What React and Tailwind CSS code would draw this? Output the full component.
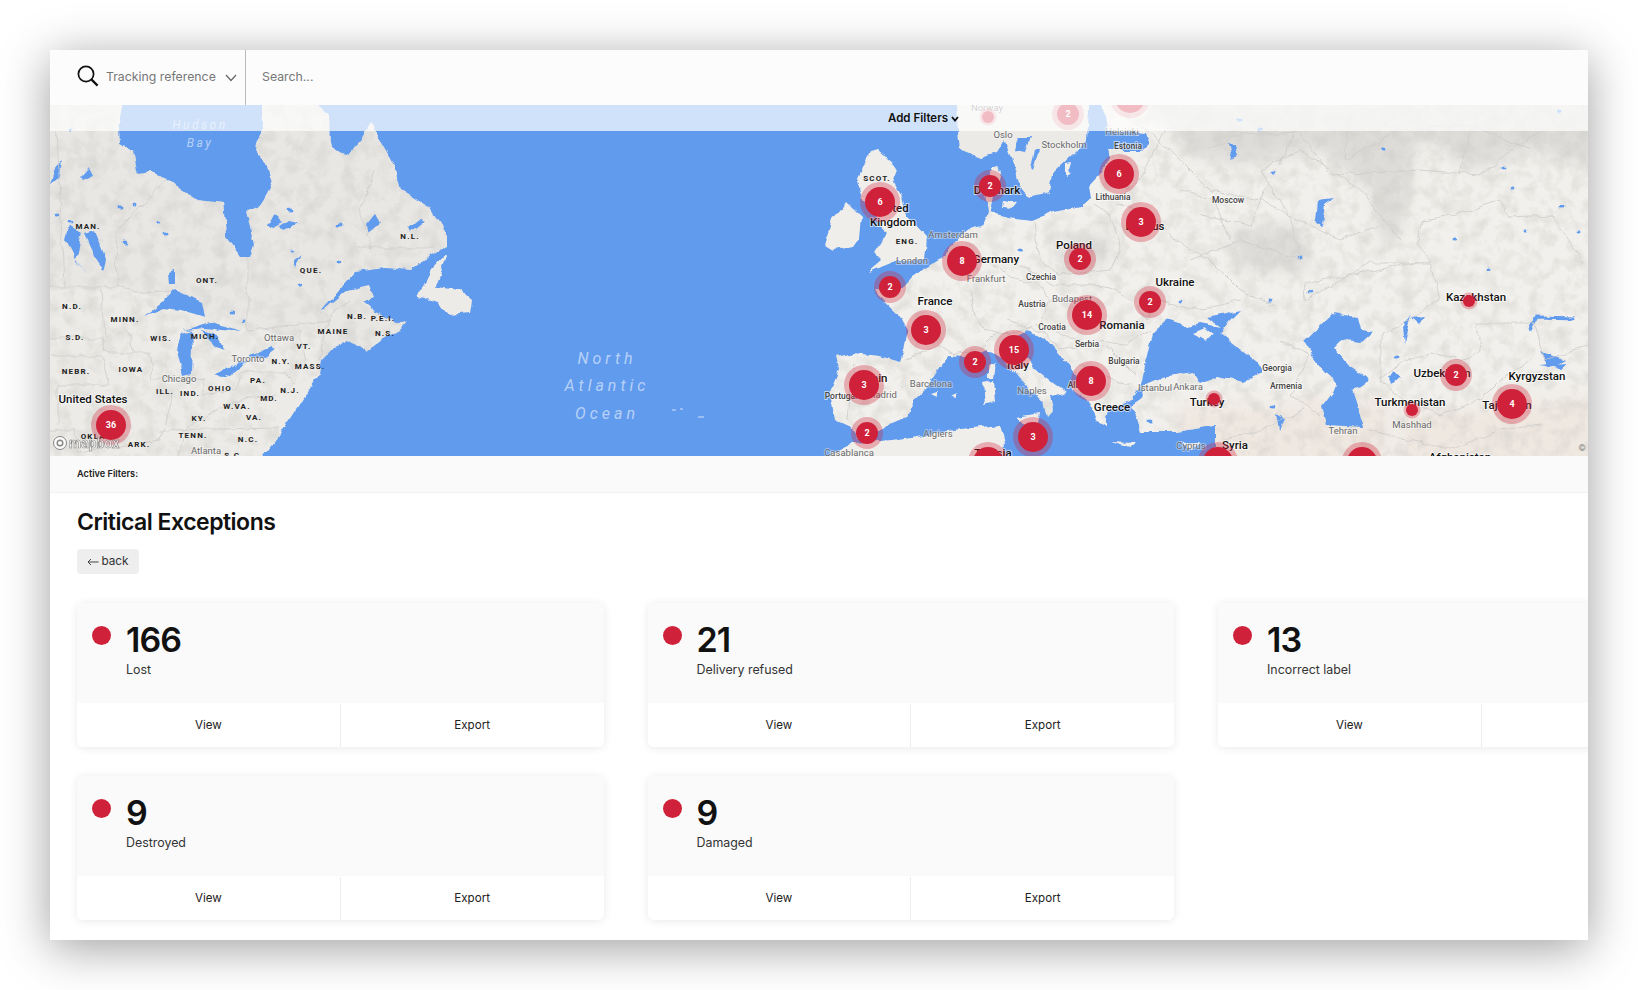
const bubbles = [
  [111, 425, "36", 1], [880, 202, "6", 1], [990, 186, "2", 0], [1119, 174, "6", 1], [1141, 222, "3", 1],
  [1080, 259, "2", 0], [962, 261, "8", 1], [890, 287, "2", 0], [926, 330, "3", 1], [1150, 302, "2", 0],
  [1087, 315, "14", 1], [1014, 350, "15", 1], [975, 362, "2", 0], [864, 385, "3", 1], [1091, 381, "8", 1],
  [867, 433, "2", 0], [1033, 437, "3", 1], [988, 462, "", 1], [1218, 462, "", 1], [1362, 462, "", 1],
  [1068, 114, "2", 0], [1130, 98, "", 1], [1456, 375, "2", 0], [1512, 404, "4", 1],
];
const dots = [[988, 117], [1214, 399], [1469, 301], [1412, 410]];

const labels = [
  ["MAN.", 88, 227, "s"], ["N.L.", 410, 237, "s"], ["QUE.", 311, 271, "s"], ["ONT.", 207, 281, "s"], ["N.D.", 72, 307, "s"],
  ["MINN.", 125, 320, "s"], ["N.B.", 357, 317, "s"], ["P.E.I.", 383, 319, "s"], ["MAINE", 333, 332, "s"], ["S.D.", 75, 338, "s"],
  ["WIS.", 161, 339, "s"], ["MICH.", 205, 337, "s"], ["N.S.", 385, 334, "s"], ["VT.", 304, 347, "s"], ["N.Y.", 281, 362, "s"],
  ["MASS.", 310, 367, "s"], ["IOWA", 131, 370, "s"], ["NEBR.", 76, 372, "s"], ["PA.", 258, 381, "s"], ["OHIO", 220, 389, "s"],
  ["ILL.", 165, 392, "s"], ["IND.", 190, 394, "s"], ["N.J.", 290, 391, "s"], ["MD.", 269, 399, "s"], ["W.VA.", 237, 407, "s"],
  ["VA.", 254, 418, "s"], ["KY.", 199, 419, "s"], ["TENN.", 193, 436, "s"], ["OKLA.", 95, 437, "s"], ["N.C.", 248, 440, "s"],
  ["ARK.", 139, 445, "s"], ["S.C.", 234, 456, "s"], ["SCOT.", 877, 179, "s"], ["ENG.", 907, 242, "s"],
  ["Ottawa", 279, 338, "g"], ["Toronto", 248, 359, "g"], ["Chicago", 179, 379, "g"], ["Atlanta", 206, 451, "g"],
  ["London", 912, 261, "g"], ["Amsterdam", 953, 235, "g"], ["Frankfurt", 986, 279, "g"], ["Budapest", 1072, 299, "g"],
  ["Barcelona", 931, 384, "g"], ["Madrid", 882, 395, "g"], ["Naples", 1032, 391, "g"], ["Istanbul", 1155, 388, "g"],
  ["Ankara", 1188, 387, "g"], ["Algiers", 938, 434, "g"], ["Cyprus", 1191, 446, "g"], ["Casablanca", 849, 453, "g"],
  ["Oslo", 1003, 135, "g"], ["Stockholm", 1064, 145, "g"], ["Helsinki", 1122, 132, "g"], ["Norway", 987, 108, "g"],
  ["Tehran", 1343, 431, "g"], ["Mashhad", 1412, 425, "g"],
  ["Czechia", 1041, 278, "r"], ["Austria", 1032, 305, "r"], ["Croatia", 1052, 328, "r"], ["Serbia", 1087, 345, "r"],
  ["Bulgaria", 1124, 362, "r"], ["Portugal", 841, 397, "r"], ["Lithuania", 1113, 198, "r"], ["Estonia", 1128, 147, "r"],
  ["Moscow", 1228, 201, "r"], ["Georgia", 1277, 369, "r"], ["Armenia", 1286, 387, "r"], ["Albania", 1082, 386, "r"],
  ["United States", 93, 400, "c"], ["United", 892, 209, "c"], ["Kingdom", 893, 223, "c"], ["Denmark", 997, 191, "c"],
  ["Germany", 996, 260, "c"], ["Poland", 1074, 246, "c"], ["Belarus", 1145, 227, "c"], ["France", 935, 302, "c"],
  ["Ukraine", 1175, 283, "c"], ["Romania", 1122, 326, "c"], ["Spain", 873, 379, "c"], ["Italy", 1018, 366, "c"],
  ["Greece", 1112, 408, "c"], ["Turkey", 1207, 403, "c"], ["Syria", 1235, 446, "c"], ["Tunisia", 993, 454, "c"],
  ["Kazakhstan", 1476, 298, "c"], ["Uzbekistan", 1442, 374, "c"], ["Kyrgyzstan", 1537, 377, "c"],
  ["Turkmenistan", 1410, 403, "c"], ["Tajikistan", 1507, 406, "c"], ["Afghanistan", 1460, 458, "c"],
];

const labelClass = {
  s: "fill-[#222] text-[8px] font-bold tracking-[1.2px]",
  g: "fill-[#6a6a6a] text-[9.5px] stroke-white/40 stroke-2 [paint-order:stroke]",
  r: "fill-[#444] text-[8.5px] font-medium stroke-white/60 stroke-2 [paint-order:stroke]",
  c: "fill-[#111] text-[11.5px] font-medium stroke-white/60 stroke-2 [paint-order:stroke]",
};

const america =
  "M40 95L125 95L119 130L120 143L134 150L139 174L151 172L167 178L178 188L198 200L223 203L225 220L226 237L240 257L251 257L255 245L251 227L247 210L261 203L272 183L266 163L255 150L256 143L262 132L262 95L313 95L329 115L330 143L331 147L348 155L362 140L371 122L380 140L393 163L400 190L432 210L446 230L446 247L428 257L411 270L385 268L355 272L320 313L348 290L369 285L374 297L362 302L372 310L400 323L409 320L400 330L383 340L366 353L359 347L348 340L334 347L322 360L320 372L306 382L294 385L282 400L278 420L278 437L255 466L40 466Z";
const newfoundland = "M446 255L432 270L418 297L439 302L449 315L470 313L472 300L460 290L435 287L447 257Z";
const eurasia =
  "M837 357L853 353L880 356L900 362L903 353L908 333L897 313L878 295L875 287L890 290L902 288L912 277L927 267L943 257L953 243L970 228L983 225L988 213L983 180L997 165L1002 177L993 197L990 212L1007 217L1033 220L1053 212L1083 207L1090 198L1088 187L1102 172L1110 158L1108 150L1140 150L1148 142L1145 133L1107 130L1102 95L1598 95L1598 466L1215 466L1215 427L1200 428L1175 432L1140 432L1135 415L1130 405L1142 397L1140 387L1130 400L1110 410L1107 417L1107 425L1097 420L1087 400L1073 390L1077 377L1067 363L1047 340L1027 330L1017 337L1020 347L1033 367L1053 383L1067 393L1050 397L1053 410L1047 417L1043 402L1027 387L1010 367L1000 357L987 350L967 358L950 355L938 370L927 387L913 400L907 417L877 430L857 437L850 427L835 420L830 393L840 370Z";
const scandinavia =
  "M955 95L958 130L960 150L980 158L997 153L1005 140L1012 157L1020 187L1030 198L1050 193L1053 173L1077 150L1087 140L1090 95Z";

const land = [
  "M870 152L878 150L895 165L898 170L893 183L900 195L908 217L927 237L925 260L898 260L867 273L882 260L875 253L888 233L877 223L878 217L863 200L857 180L863 167Z",
  "M833 220L847 202L862 217L860 237L853 247L833 250L825 245Z",
  "M830 466L830 455L853 443L892 440L953 430L1000 425L1005 443L1003 466Z",
  "M988 367L995 364L993 378L988 378Z M983 382L993 380L995 402L985 405Z M1017 417L1040 413L1037 428L1023 423Z",
  "M1110 442L1135 443L1130 447Z M1180 443L1200 442L1193 449Z M1003 200L1017 203L1013 208L1002 207Z M1065 163L1072 162L1068 175L1065 177Z",
  "M932 393L938 391L938 396Z M950 395L955 392L955 398Z",
];

const lakes = [
  "M143 317L164 300L174 290L202 302L205 317L181 310L164 308Z", "M177 350L181 333L191 330L192 347L191 373L183 375Z",
  "M202 330L218 335L226 350L216 347L208 340Z", "M183 330L210 322L240 332L205 328Z", "M214 375L240 363L249 362L240 368L223 377Z",
  "M249 355L272 347L275 350L265 357L251 358Z", "M84 233L94 230L106 260L103 270L96 260Z", "M70 225L82 232L76 260L88 275L78 262L66 240Z",
  "M54 170L62 160L60 175L50 185Z", "M80 178L90 167L94 175L83 180Z", "M265 225L275 215L283 221L270 228Z", "M280 225L288 220L300 222L283 230Z",
  "M365 225L375 213L380 222L368 232Z", "M408 228L420 218L425 220L410 232Z", "M168 272L175 270L175 283L169 283Z", "M293 262L302 255L295 268Z",
  "M1018 137L1030 137L1025 152L1015 150Z", "M1034 150L1038 150L1032 170L1030 168Z",
  "M1228 143L1235 145L1238 155L1232 158Z", "M1318 200L1333 198L1325 204L1322 225L1316 220Z", "M1403 330L1412 315L1405 342Z",
  "M1412 318L1425 316L1420 325Z", "M1393 370L1400 378L1392 385L1390 378Z", "M1540 350L1565 360L1550 368Z", "M1277 415L1285 420L1280 430Z",
  "M1540 365L1566 363L1560 368Z",
];
const ponds = [
  [1383, 147], [1273, 173], [1502, 167], [1513, 188], [1562, 207], [1578, 233], [1455, 238], [1489, 269], [1525, 230],
  [1397, 357], [1300, 257], [1270, 300], [1310, 293], [1272, 408], [1240, 120], [1260, 130], [1560, 112],
  [57, 215], [70, 222], [120, 207], [136, 205], [125, 243], [160, 222], [166, 235], [289, 210], [291, 250], [338, 262], [300, 285],
  [340, 225], [70, 130], [232, 312], [245, 320], [1180, 300], [1125, 405], [1150, 420], [1020, 250],
];

const americaBorders = [
  "M57 130L64 287L50 287", "M64 287L117 287L116 233L167 178", "M117 287L140 293L172 292", "M50 338L102 338L105 353L150 353L152 378L190 378L204 380",
  "M50 356L102 356L110 385L58 385L58 425", "M50 430L75 430L78 452L160 440L174 392", "M160 430L280 428", "M177 458L185 430L205 415L240 400L275 395",
  "M204 378L204 395L236 390L240 372L285 372L294 385", "M248 257L248 330L270 328L330 322", "M355 248L435 248", "M375 170L360 215L372 250",
  "M325 330L335 310L350 300", "M300 330L305 365", "M325 335L320 360", "M102 290L105 338", "M135 353L125 330",
];
const eurasiaBorders = [
  "M970 290L975 315L985 330L1003 335L1040 325L1050 300L1040 285L1010 278L1000 268L985 260",
  "M1020 265L1052 285L1090 285L1120 290L1148 320L1155 300L1200 310L1240 300",
  "M1035 222L1040 260L1060 275L1110 270L1120 245L1110 215L1095 205",
  "M1115 205L1150 212L1175 240L1215 265L1240 290L1275 305",
  "M1120 195L1140 180L1150 160L1165 130", "M1040 325L1075 340L1110 350L1135 375",
  "M1095 340L1125 345L1150 330", "M1080 365L1100 375L1130 385", "M905 360L940 345L955 355L985 345L1000 330",
  "M1280 340L1310 355L1290 395L1320 415", "M1225 440L1260 430L1305 410",
  "M855 365L850 395L848 420", "M1005 320L1045 333L1060 350L1090 345",
  "M1423 220L1467 212L1500 200L1510 217L1553 215L1583 263", "M1423 220L1417 245L1430 260L1306 283L1305 300L1340 280L1370 263L1430 263",
  "M1430 263L1440 300L1430 305L1412 320L1381 335L1381 378L1400 363L1430 353L1467 360L1480 350L1477 323L1533 323L1545 360L1588 345",
  "M1381 378L1395 395L1440 415L1480 400L1500 380L1530 360", "M1370 430L1450 450L1500 430L1540 425",
  "M1210 150L1240 135L1300 132L1330 175L1420 170L1480 175L1540 130", "M1170 150L1210 190L1260 200L1290 215L1340 240L1380 225",
  "M1190 260L1240 240L1300 260", "M1300 260L1290 215L1260 170L1300 150L1360 190L1400 240", "M1120 110L1170 150",
  "M1200 215L1250 225L1270 180", "M1350 105L1345 160L1400 130L1470 125", "M1460 175L1470 125L1530 150",
  "M1300 120L1280 165", "M1230 240L1215 200L1180 190",
];
const patches = [
  "M1140 95L1598 95L1598 170L1530 150L1470 170L1420 135L1400 235L1385 250L1370 190L1320 150L1240 165L1190 155Z",
  "M1060 235L1110 235L1110 262L1060 270Z", "M1230 230L1300 225L1310 270L1240 270Z",
];
const warmPatches = ["M1180 405L1300 405L1320 466L1170 466Z", "M1400 415L1598 395L1598 466L1400 466Z", "M1300 395L1390 400L1390 466L1300 466Z"];

function MapLayer() {
  return (
    <svg viewBox="50 105 1538 351" className="absolute inset-0 h-full w-full font-['Roboto',sans-serif]">
      <defs>
        <clipPath id="land-clip">
          <path d={america} />
          <path d={eurasia} />
        </clipPath>
        <filter id="coast" filterUnits="userSpaceOnUse" x="40" y="95" width="1560" height="371" colorInterpolationFilters="sRGB">
          <feTurbulence type="fractalNoise" baseFrequency="0.07" numOctaves="3" seed="4" result="noise" />
          <feDisplacementMap in="SourceGraphic" in2="noise" scale="7" xChannelSelector="R" yChannelSelector="G" />
        </filter>
        <filter id="mottle" filterUnits="userSpaceOnUse" x="40" y="95" width="1560" height="371" colorInterpolationFilters="sRGB">
          <feTurbulence type="fractalNoise" baseFrequency="0.07" numOctaves="3" seed="9" />
          <feColorMatrix values="0 0 0 0 0.78  0 0 0 0 0.78  0 0 0 0 0.76  0 0 0 2.2 -0.95" />
        </filter>
        <filter id="soft" filterUnits="userSpaceOnUse" x="40" y="95" width="1560" height="371" colorInterpolationFilters="sRGB">
          <feGaussianBlur stdDeviation="7" />
        </filter>
      </defs>

      <rect x="50" y="105" width="1538" height="351" fill="#619bee" />

      <g filter="url(#coast)">
        <path d={america} fill="#e8e7e4" />
        <path d="M40 290L120 290L170 300L260 330L320 340L320 372L278 437L255 466L40 466Z" fill="#ecebe7" />
        <path d={newfoundland} fill="#ecebe7" />
        <path d={eurasia} fill="#f2f0ec" />
        <g clipPath="url(#land-clip)">
          {patches.map((d) => (
            <path key={d} d={d} fill="#dddcd9" filter="url(#soft)" />
          ))}
          {warmPatches.map((d) => (
            <path key={d} d={d} fill="#efe8e1" filter="url(#soft)" />
          ))}
          <rect x="40" y="95" width="1000" height="371" filter="url(#mottle)" opacity="0.22" />
          <rect x="1040" y="95" width="560" height="110" filter="url(#mottle)" opacity="0.25" />
        </g>
        <path d={scandinavia} fill="#ebeae7" />
        {land.map((d) => (
          <path key={d} d={d} fill="#f0eeea" />
        ))}

        {/* black sea + caspian */}
        <path d="M1145 367L1153 333L1167 320L1187 327L1200 323L1220 327L1207 317L1240 310L1223 327L1220 333L1257 363L1262 372L1243 382L1217 377L1200 383L1193 372L1163 377L1140 387Z" fill="#619bee" />
        <path d="M1193 333L1205 328L1215 335L1205 340Z" fill="#f2f0ec" />
        <path d="M1303 342L1333 313L1357 317L1360 330L1372 332L1360 343L1340 340L1333 347L1350 367L1370 380L1360 387L1353 390L1365 427L1327 425L1322 407L1337 387L1313 357Z" fill="#619bee" />
        <path d="M1200 427L1215 425L1215 466L1200 466Z" fill="#619bee" />
        <path d="M1529 331L1537 317L1575 318" fill="none" stroke="#619bee" strokeWidth="3" />

        {lakes.map((d) => (
          <path key={d} d={d} fill="#619bee" />
        ))}
        {ponds.map(([x, y]) => (
          <ellipse key={x + "-" + y} cx={x} cy={y} rx="2.5" ry="1.6" fill="#619bee" />
        ))}
        {americaBorders.map((d) => (
          <path key={d} d={d} fill="none" stroke="#cfcdcb" strokeWidth="0.8" />
        ))}
        {eurasiaBorders.map((d) => (
          <path key={d} d={d} fill="none" stroke="#cdcbc9" strokeWidth="0.8" />
        ))}
      </g>

      {labels.map(([text, x, y, kind]) => (
        <text key={text + x} x={x} y={y} textAnchor="middle" dominantBaseline="middle" className={labelClass[kind]}>
          {text}
        </text>
      ))}

      <g fill="#fff" fillOpacity="0.55" textAnchor="middle" fontStyle="italic" letterSpacing="4" fontSize="16">
        <text x="607" y="364">North</text>
        <text x="607" y="391">Atlantic</text>
        <text x="607" y="419">Ocean</text>
        <text x="200" y="129" fontSize="12" letterSpacing="2.5">Hudson</text>
        <text x="200" y="147" fontSize="12" letterSpacing="2.5">Bay</text>
      </g>
      <path d="M672 410H676M680 409H683M698 417H704" stroke="#fff" strokeOpacity="0.7" strokeWidth="1" />

      {bubbles.map(([x, y, n, big]) => (
        <g key={x}>
          <circle cx={x} cy={y} r={big ? 20 : 16} fill="#cf2139" fillOpacity="0.32" />
          <circle cx={x} cy={y} r={big ? 15 : 11} fill="#cf2139" />
          <text x={x} y={y} textAnchor="middle" dominantBaseline="central" fill="#fff" fontSize="9" fontWeight="700">
            {n}
          </text>
        </g>
      ))}
      {dots.map(([x, y]) => (
        <g key={x}>
          <circle cx={x} cy={y} r="8.5" fill="#cf2139" fillOpacity="0.3" />
          <circle cx={x} cy={y} r="6" fill="#cf2139" />
        </g>
      ))}

      {/* mapbox mark */}
      <g opacity="0.85">
        <circle cx="60" cy="443" r="6.5" fill="#fff" stroke="#777" strokeWidth="1" />
        <circle cx="60" cy="443" r="2.8" fill="none" stroke="#777" strokeWidth="1.4" />
        <text x="69" y="447.5" fontSize="14" fontWeight="700" fill="#fff" fillOpacity="0.6" stroke="#777" strokeWidth="0.6">mapbox</text>
      </g>
      <text x="1582" y="451" textAnchor="middle" fontSize="9" fill="#777">©</text>
    </svg>
  );
}

function Card({ count, label }) {
  return (
    <div className="flex h-[144px] flex-col overflow-hidden rounded-md bg-white shadow-[0_1px_10px_rgba(0,0,0,0.09)]">
      <div className="flex flex-1 bg-[#fafafa] pl-[15px] pt-[20px]">
        <span className="mt-[2.5px] h-[19px] w-[19px] rounded-full bg-[#cf2139]" />
        <div className="ml-[15px]">
          <div className="text-[34px] font-semibold leading-[34px] tracking-[-1px] text-[#111]">{count}</div>
          <div className="mt-[4px] text-[12.4px] leading-[18px] text-[#333]">{label}</div>
        </div>
      </div>
      <div className="flex h-[44px] pt-[1px] text-[11.6px] text-[#222]">
        <button className="flex-1 border-r border-[#eee]">View</button>
        <button className="flex-1">Export</button>
      </div>
    </div>
  );
}

export default function App() {
  const cards = [
    ["166", "Lost"],
    ["21", "Delivery refused"],
    ["13", "Incorrect label"],
    ["9", "Destroyed"],
    ["9", "Damaged"],
  ];

  return (
    <div className="h-[990px] w-[1638px] overflow-hidden bg-white p-[50px] font-['Inter',sans-serif]">
      <div className="h-[890px] overflow-hidden bg-white shadow-[0_8px_45px_rgba(0,0,0,0.38)]">
        {/* search bar */}
        <div className="flex h-[55px] items-stretch bg-[#fcfcfc] text-[12.3px] text-[#777]">
          <div className="flex w-[196px] items-center border-r border-[#bbb] pl-[27px]">
            <svg className="-mt-[3px]" width="22" height="22" viewBox="0 0 22 22" fill="none" stroke="#111" strokeWidth="1.7">
              <circle cx="9" cy="9" r="7.6" />
              <path d="M14.6 14.6L20.6 20.6" strokeWidth="2.2" />
            </svg>
            <span className="ml-[7px] whitespace-nowrap">Tracking reference</span>
            <svg className="ml-[9px]" width="12" height="8" viewBox="0 0 12 8" fill="none" stroke="#666" strokeWidth="1.2">
              <path d="M1 1L6 6.5L11 1" />
            </svg>
          </div>
          <div className="flex items-center pl-[16px]">Search...</div>
        </div>

        {/* map */}
        <div className="relative h-[351px] overflow-hidden">
          <MapLayer />
          <div className="absolute inset-x-0 top-0 flex h-[26px] items-center bg-white/70 pl-[838px] pt-[1px] text-[11.5px] font-semibold text-[#111]">
            Add Filters
            <svg className="ml-[3px]" width="8" height="6" viewBox="0 0 8 6" fill="none" stroke="#111" strokeWidth="1.8">
              <path d="M1 1L4 4.5L7 1" />
            </svg>
          </div>
        </div>

        <div className="flex h-[37px] items-center border-b border-[#f2f2f2] bg-[#fafafa] pl-[27px] text-[9.2px] font-semibold text-[#222]">
          Active Filters:
        </div>

        <div className="px-[27px] pt-[14px]">
          <h1 className="text-[23px] font-semibold leading-[30px] tracking-[-0.5px] text-[#111]">Critical Exceptions</h1>
          <button className="mt-[12px] flex h-[25px] w-[62px] items-center justify-center rounded bg-[#eee] text-[11.8px] text-[#333]">
            <svg className="mr-[2px]" width="12" height="8" viewBox="0 0 12 8" fill="none" stroke="#444" strokeWidth="1">
              <path d="M11.5 4H1M4 1L1 4L4 7" />
            </svg>
            back
          </button>
          <div className="mt-[29px] grid w-[1668px] grid-cols-[repeat(3,526.5px)] gap-x-[44px] gap-y-[29px]">
            {cards.map(([count, label]) => (
              <Card key={label} count={count} label={label} />
            ))}
          </div>
        </div>
      </div>
    </div>
  );
}
